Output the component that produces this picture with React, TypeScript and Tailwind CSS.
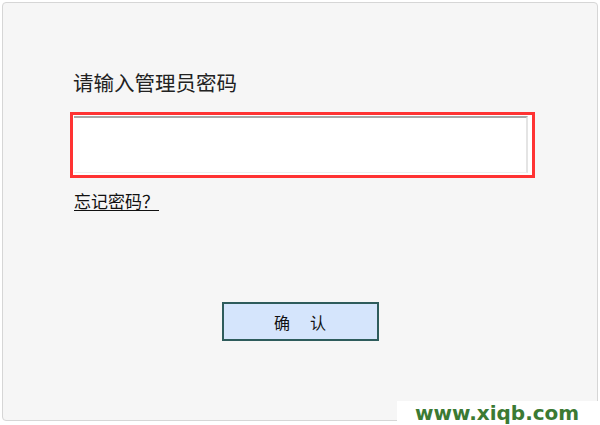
import React from "react";

const cjk = { fontFamily: '"Noto Sans CJK SC", "Noto Sans", sans-serif' };

export default function App() {
  return (
    <div className="relative w-[600px] h-[425px] bg-white overflow-hidden">
      <div className="absolute left-[2px] top-[2px] w-[596px] h-[419px] rounded-[4px] border border-[#d6d6d6] bg-[#f6f6f6]">
        <div className="flex flex-col pl-[67px]">
          <div className="mt-[69px] ml-[3px] text-[20.5px] leading-[21px] text-[#222]" style={cjk}>
            请输入管理员密码
          </div>
          <div className="mt-[19px] w-[465px] h-[66px] border-[3px] border-[#ff3333] bg-white pt-px pl-px pr-[4px] pb-[2px]">
            <div className="h-full border-t-2 border-t-[#a8a8a8] border-r-2 border-r-[#e4e4e4] border-b border-b-[#f0f0f0]" />
          </div>
          <div className="mt-[12px] ml-[4px]">
            <a className="text-[17px] leading-[17px] text-[#111] underline underline-offset-2" style={cjk}>
              忘记密码？
            </a>
          </div>
        </div>
        <div className="flex justify-center mt-[88px]">
          <div className="w-[157px] h-[39px] border-2 border-[#2e5c5c] bg-[#d5e5fc] flex items-center justify-center gap-[20px] text-[16px] leading-[16px] text-[#111]" style={cjk}>
            <span>确</span>
            <span>认</span>
          </div>
        </div>
      </div>
      <div className="absolute left-[397px] top-[401px] w-[203px] h-[24px] bg-white flex items-center">
        <span className="ml-[18px] text-[20px] leading-[24px] font-bold text-[#3b7a33]" style={{ fontFamily: '"DejaVu Sans", sans-serif' }}>
          www.xiqb.com
        </span>
      </div>
    </div>
  );
}
